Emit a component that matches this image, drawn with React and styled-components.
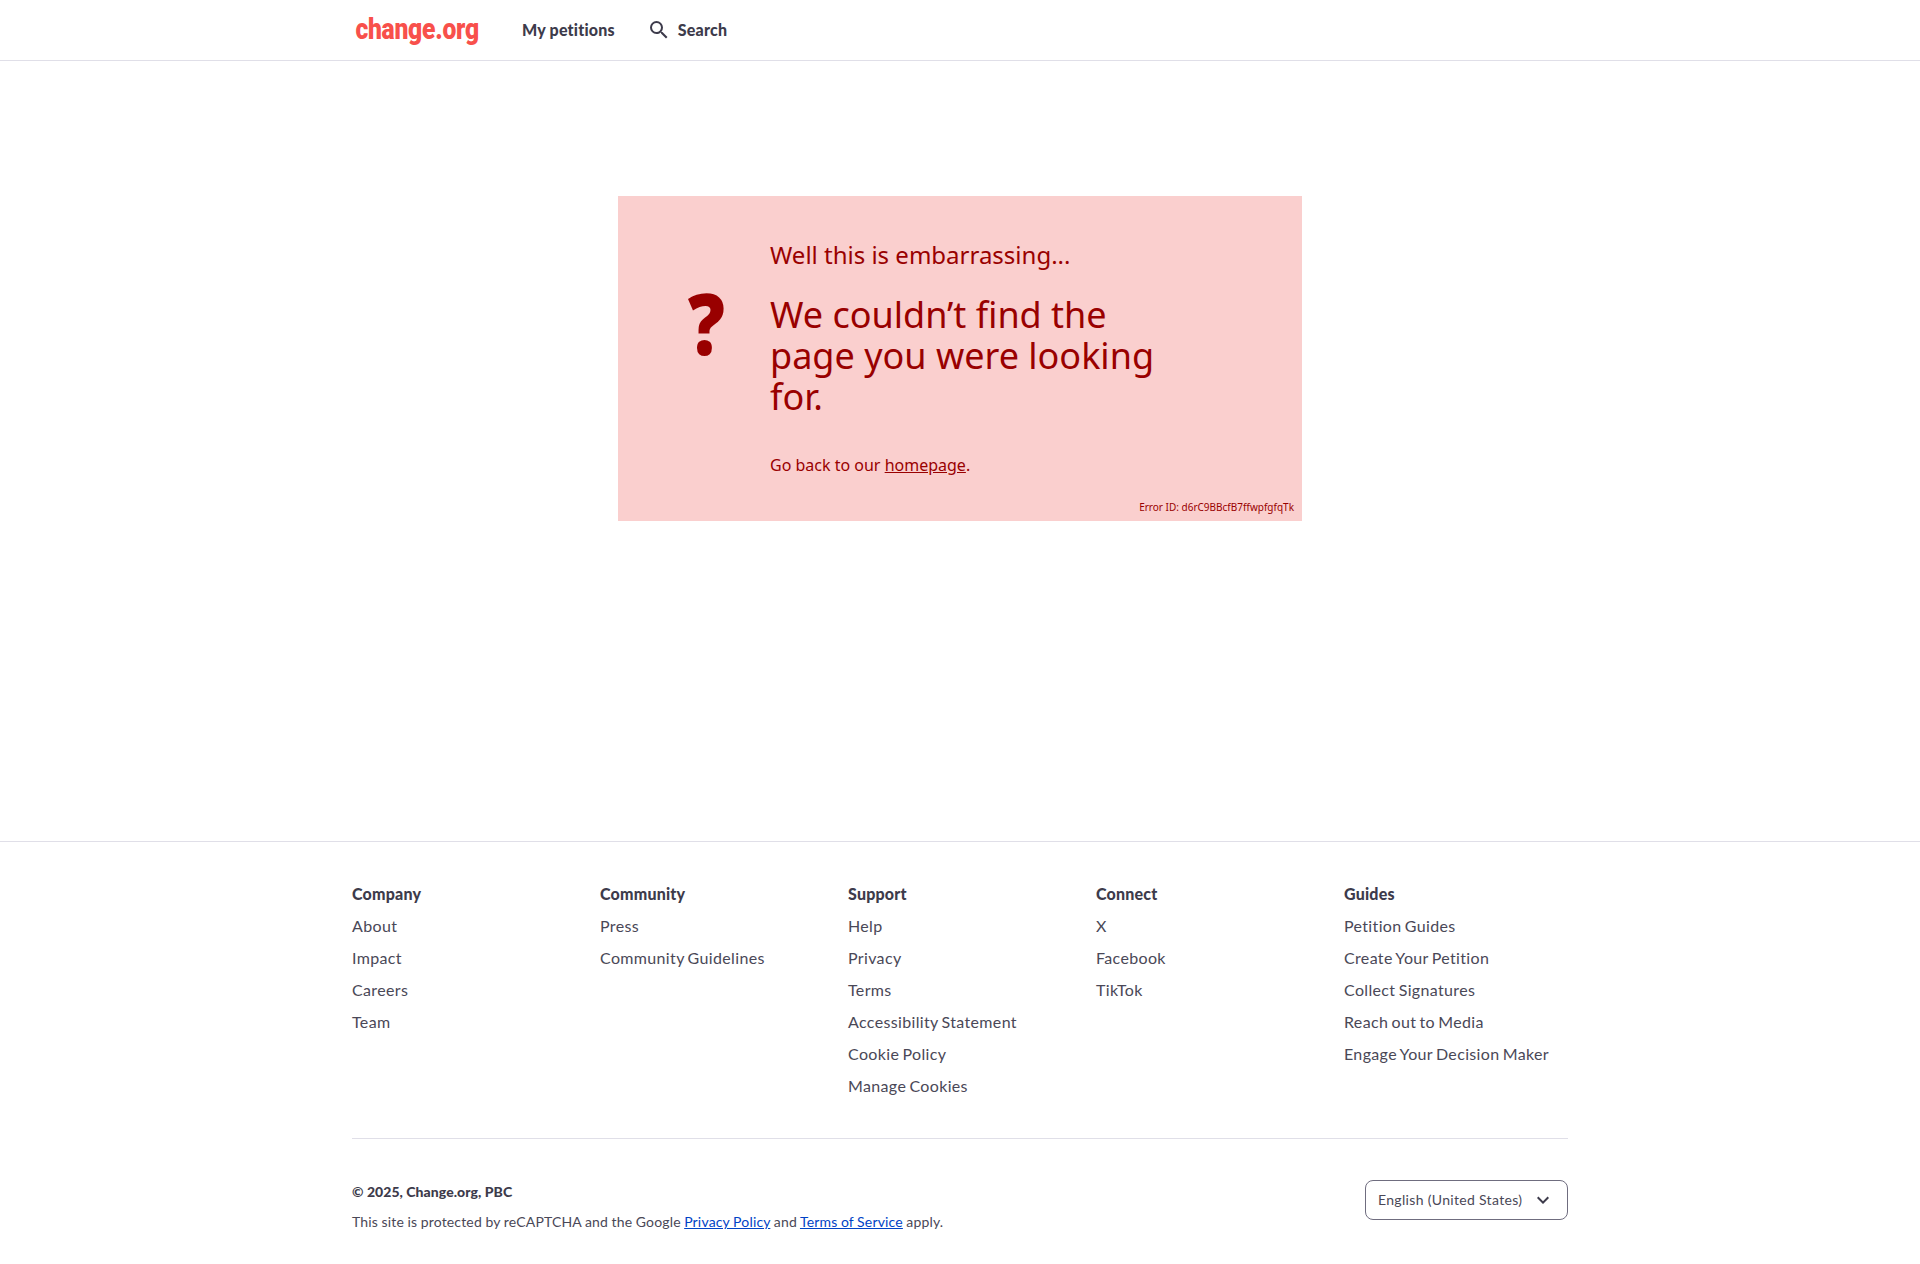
import React from 'react'
import styled, { createGlobalStyle } from 'styled-components'
import { MdSearch, MdKeyboardArrowDown } from 'react-icons/md'

const GlobalStyle = createGlobalStyle`
  html, body {
    margin: 0;
    padding: 0;
    background: #fff;
    font-family: "Lato", "Noto Sans", sans-serif;
    color: #3d3b4b;
  }
  * { box-sizing: border-box; }
`

const columns = [
  { title: 'Company', links: ['About', 'Impact', 'Careers', 'Team'] },
  { title: 'Community', links: ['Press', 'Community Guidelines'] },
  { title: 'Support', links: ['Help', 'Privacy', 'Terms', 'Accessibility Statement', 'Cookie Policy', 'Manage Cookies'] },
  { title: 'Connect', links: ['X', 'Facebook', 'TikTok'] },
  { title: 'Guides', links: ['Petition Guides', 'Create Your Petition', 'Collect Signatures', 'Reach out to Media', 'Engage Your Decision Maker'] },
]

const App = () => {
  return (
    <Page>
      <GlobalStyle />
      <Header>
        <HeaderInner>
          <Logo>change.org</Logo>
          <NavItem>My petitions</NavItem>
          <SearchItem>
            <MdSearch size={24} />
            Search
          </SearchItem>
        </HeaderInner>
      </Header>

      <Main>
        <ErrorCard>
          <QuestionMark>?</QuestionMark>
          <ErrorBody>
            <Lead>Well this is embarrassing...</Lead>
            <Headline>We couldn’t find the page you were looking for.</Headline>
            <BackText>Go back to our <a href="#home">homepage</a>.</BackText>
          </ErrorBody>
          <ErrorId>Error ID: d6rC9BBcfB7ffwpfgfqTk</ErrorId>
        </ErrorCard>
      </Main>

      <Footer>
        <FooterInner>
          <LinkGrid>
            {columns.map((col) => (
              <LinkColumn key={col.title}>
                <ColumnTitle>{col.title}</ColumnTitle>
                {col.links.map((link) => (
                  <FooterLink key={link}>{link}</FooterLink>
                ))}
              </LinkColumn>
            ))}
          </LinkGrid>
          <BottomRow>
            <Legal>
              <Copyright>© 2025, Change.org, PBC</Copyright>
              <Recaptcha>
                This site is protected by reCAPTCHA and the Google <a href="#privacy">Privacy Policy</a> and <a href="#terms">Terms of Service</a> apply.
              </Recaptcha>
            </Legal>
            <LanguageSelect>
              English (United States)
              <MdKeyboardArrowDown size={24} />
            </LanguageSelect>
          </BottomRow>
        </FooterInner>
      </Footer>
    </Page>
  )
}

export default App

const Page = styled.div`
  width: 100%;
  min-height: 1264px;
  display: flex;
  flex-direction: column;
`

const Header = styled.header`
  height: 61px;
  border-bottom: 1px solid #e0dfe8;
`

const HeaderInner = styled.div`
  width: 1216px;
  height: 60px;
  margin: 0 auto;
  display: flex;
  align-items: center;
`

const Logo = styled.div`
  width: 170px;
  margin-top: -3px;
  padding-left: 4px;
  font-family: "Roboto", sans-serif;
  font-weight: 900;
  font-size: 29px;
  letter-spacing: -0.3px;
  color: #f8504b;
  transform: scaleX(0.85);
  transform-origin: left center;
`

const NavItem = styled.div`
  margin-top: -1px;
  font-size: 16px;
  font-weight: 900;
  letter-spacing: 0.2px;
  color: #3d3b4b;
`

const SearchItem = styled(NavItem)`
  display: flex;
  align-items: center;
  gap: 7px;
  margin-left: 32px;
`

const Main = styled.main`
  height: 780px;
  padding-top: 135px;
  display: flex;
  justify-content: center;
  align-items: flex-start;
`

const ErrorCard = styled.section`
  position: relative;
  width: 684px;
  height: 325px;
  padding: 42px 0 0 64px;
  display: flex;
  background: #facfce;
  color: #990000;
  font-family: "Noto Sans", sans-serif;
`

const QuestionMark = styled.div`
  width: 88px;
  height: 138px;
  padding: 34px 0 0 7px;
  font-size: 85px;
  line-height: 100px;
  font-weight: 900;
  transform: scaleX(0.86);
  transform-origin: left center;
`

const ErrorBody = styled.div`
  width: 400px;
`

const Lead = styled.div`
  font-size: 24px;
  line-height: 33px;
  margin-bottom: 23px;
`

const Headline = styled.h1`
  margin: 0 0 37px;
  font-size: 36px;
  line-height: 41px;
  font-weight: 400;
`

const BackText = styled.div`
  font-size: 16px;
  line-height: 22px;

  a { color: inherit; }
`

const ErrorId = styled.div`
  position: absolute;
  right: 8px;
  bottom: 7px;
  font-size: 10px;
  line-height: 14px;
`

const Footer = styled.footer`
  border-top: 1px solid #e0dfe8;
`

const FooterInner = styled.div`
  width: 1216px;
  margin: 0 auto;
`

const LinkGrid = styled.div`
  display: grid;
  grid-template-columns: repeat(5, 248px);
  padding-top: 36px;
  height: 297px;
  border-bottom: 1px solid #e0dfe8;
`

const LinkColumn = styled.div`
  display: flex;
  flex-direction: column;
`

const ColumnTitle = styled.div`
  font-size: 16px;
  line-height: 32px;
  font-weight: 900;
  letter-spacing: 0.2px;
`

const FooterLink = styled.div`
  font-size: 16px;
  line-height: 32px;
  letter-spacing: 0.35px;
  word-spacing: -1.2px;
  color: #4a4857;
`

const BottomRow = styled.div`
  display: flex;
  justify-content: space-between;
  align-items: flex-start;
  padding-top: 41px;
`

const Legal = styled.div`
  display: flex;
  flex-direction: column;
`

const Copyright = styled.div`
  margin-top: 2px;
  font-size: 14px;
  line-height: 20px;
  font-weight: 900;
  letter-spacing: 0.05px;
`

const Recaptcha = styled.div`
  margin-top: 10px;
  font-size: 14px;
  line-height: 20px;
  letter-spacing: 0.17px;
  word-spacing: -0.3px;
  color: #4a4857;

  a { color: #0043c6; }
`

const LanguageSelect = styled.div`
  width: 203px;
  height: 40px;
  padding: 0 12px 1px 12px;
  display: flex;
  align-items: center;
  justify-content: space-between;
  border: 1px solid #6f6d7f;
  border-radius: 8px;
  font-size: 14px;
  letter-spacing: 0.32px;
  color: #4a4857;

  svg { color: #3d3b4b; }
`
